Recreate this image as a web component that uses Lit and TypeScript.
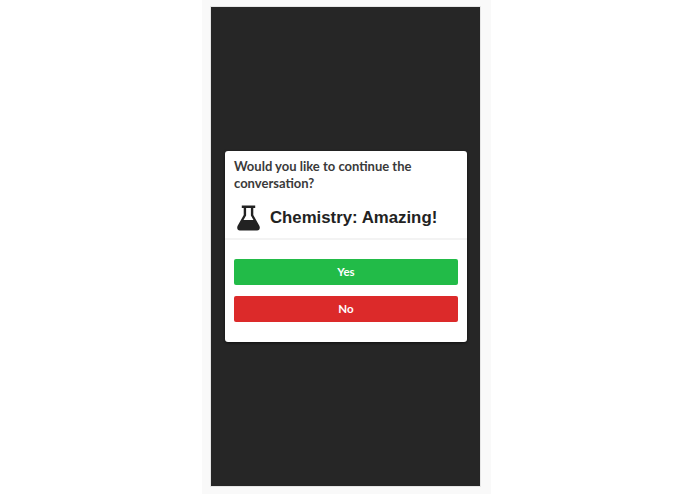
import { LitElement, html, css } from "lit";
import { customElement } from "lit/decorators.js";

@customElement("app-root")
export class AppRoot extends LitElement {
  static styles = css`
    :host { display: block; width: 695px; height: 494px; background: #fff; font-family: Lato, sans-serif; overflow: hidden; }
    .frame { width: 269px; height: 479px; margin-left: 202px; padding: 7px 11px 8px 9px; background: #f9f9f9; }
    .screen { height: 479px; background: #262626; display: flex; align-items: center; justify-content: center; box-shadow: 0 0 0 1px #e6e6e6; }
    .modal { width: 242px; height: 191px; margin-top: -1px; margin-left: 1px; box-sizing: border-box; background: #fff; border-radius: 3px; box-shadow: 0 1px 3px rgba(0,0,0,.6); display: flex; flex-direction: column; }
    .head { padding: 7px 9px 0; box-sizing: border-box; border-bottom: 2px solid #f3f3f3; height: 89px; }
    .q { font-size: 13px; font-weight: 700; line-height: 17px; color: #3a3a3a; margin: 0; }
    .topic { display: flex; align-items: center; gap: 10px; margin-top: 13px; padding-left: 3px; }
    .topic svg { width: 23px; height: 26px; flex: none; }
    .topic span { font-family: "Liberation Sans", Arial, sans-serif; font-weight: 700; font-size: 16.8px; color: #222; }
    .actions { padding: 19px 9px 0; display: flex; flex-direction: column; gap: 10.5px; }
    .btn { height: 26.5px; border-radius: 2px; color: #fff; font-size: 11.5px; font-weight: 700; display: flex; align-items: center; justify-content: center; }
    .yes { background: #22bb48; }
    .no { background: #dc2a2a; }
  `;
  render() {
    return html`<div class="frame"><div class="screen"><div class="modal">
      <div class="head">
        <p class="q">Would you like to continue the conversation?</p>
        <div class="topic">
          <svg viewBox="0 0 24 26" preserveAspectRatio="none" aria-hidden="true"><path fill="#222" fill-rule="evenodd" d="M5 0.500h14v2.600h-2V10l6.300 10.800c1.200 2.200 .2 4.700-2.300 4.700H3c-2.500 0-3.500-2.500-2.300-4.700L7 10V3.100H5ZM9.500 3.100v7.500L6.800 15h10.400l-2.700-4.400V3.100Z"/></svg>
          <span>Chemistry: Amazing!</span>
        </div>
      </div>
      <div class="actions">
        <div class="btn yes">Yes</div>
        <div class="btn no">No</div>
      </div>
    </div></div></div>`;
  }
}
